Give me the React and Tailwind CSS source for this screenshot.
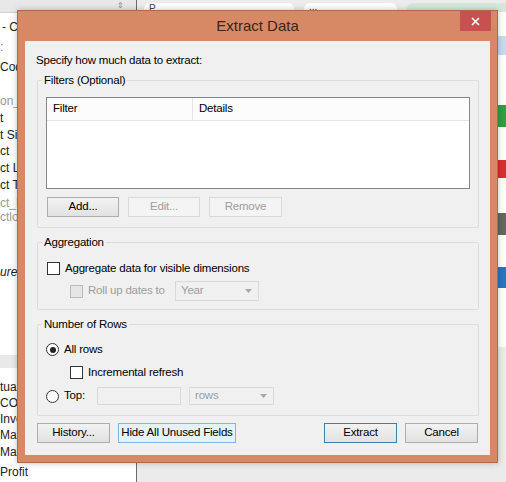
import React from 'react';

const font = { fontFamily: '"Liberation Sans", Arial, sans-serif' };

// rows of the field list peeking out from behind the dialog
const fieldRows = [
  { text: '- Coffee', mt: 'mt-[7px]', cls: 'text-[#222] pl-[2px]' },
  { text: ':', mt: 'mt-[6px]', cls: 'text-[#4a7fc1]' },
  { text: 'Code', mt: 'mt-[6px]', cls: 'text-[#222]' },
  { text: 'on_ID', mt: 'mt-[20px]', cls: 'text-[#999]' },
  { text: 't', mt: 'mt-[3px]', cls: 'text-[#222]' },
  { text: 't Size', mt: 'mt-[3px]', cls: 'text-[#222]' },
  { text: 'ct', mt: 'mt-[2px]', cls: 'text-[#222]' },
  { text: 'ct Line', mt: 'mt-[3px]', cls: 'text-[#222]' },
  { text: 'ct Type', mt: 'mt-[3px]', cls: 'text-[#222]' },
  { text: 'ct_Field', mt: 'mt-[4px]', cls: 'text-[#999]' },
  { text: 'ctlon', mt: 'mt-0', cls: 'text-[#999]' },
  { text: 'ure Names', mt: 'mt-[41px]', cls: 'text-[#222] italic' },
];

const measureRows = ['tual', 'COGS', 'Inventory', 'Margin', 'Marketing', 'Profit'];
const measureGaps = ['mt-[12px]', 'mt-[2px]', 'mt-[2px]', 'mt-[2px]', 'mt-[3px]', 'mt-[6px]'];

const Checkbox = ({ disabled }) => (
  <span
    className={`inline-block w-[13px] h-[13px] border shrink-0 ${
      disabled ? 'border-[#bcbcbc] bg-[#e6e6e6]' : 'border-[#333] bg-white'
    }`}
  />
);

const Radio = ({ checked }) => (
  <span className="w-[13px] h-[13px] rounded-full border border-[#333] bg-white flex items-center justify-center shrink-0">
    {checked && <span className="w-[6px] h-[6px] rounded-full bg-[#222]" />}
  </span>
);

const Button = ({ children, w, disabled, focus, hot }) => {
  let cls = 'border-[#adadad] bg-linear-to-b from-[#f2f2f2] to-[#e2e2e2] text-black';
  if (disabled) cls = 'border-[#d9d9d9] bg-[#f4f4f4] text-[#9d9d9d]';
  if (focus) cls = 'border-[#3c7fb1] bg-linear-to-b from-[#f2f2f2] to-[#e2e2e2] text-black';
  if (hot) cls = 'border-[#7eb4ea] bg-[#e5f1fb] text-black';
  return (
    <div className={`${w} h-[20px] border flex items-center justify-center whitespace-nowrap leading-none ${cls}`}>
      {children}
    </div>
  );
};

const Arrow = () => (
  <svg width="7" height="4" viewBox="0 0 7 4" className="shrink-0">
    <path d="M0 0 L7 0 L3.5 4 Z" fill="#a8a8a8" />
  </svg>
);

const Combo = ({ text, w, h }) => (
  <div className={`${w} ${h} border border-[#d9d9d9] bg-[#f0f0f0] flex items-center justify-between pl-[5px] pr-[6px] text-[#9d9d9d]`}>
    <span>{text}</span>
    <Arrow />
  </div>
);

const Group = ({ label, className, children }) => (
  <div className={`relative mr-[11px] ml-[12px] border border-[#dcdcdc] rounded-[2px] ${className}`}>
    <span className="absolute -top-[8px] left-[4px] px-[2px] bg-[#f0f0f0] leading-[15px] text-black">
      {label}
    </span>
    {children}
  </div>
);

export default function App() {
  return (
    <div className="relative w-[506px] h-[482px] overflow-hidden bg-white flex text-[12px]" style={font}>
      {/* left field list */}
      <div className="w-[137px] h-full bg-white flex flex-col border-r border-[#6b6b6b]">
        <div className="h-[13px] bg-[#e8e8e8] border-b border-[#d0d0d0] flex items-center justify-end pr-[12px]">
          <span className="text-[8px] text-[#888] leading-none">⇕</span>
        </div>
        {fieldRows.map((r, i) => (
          <div key={i} className={`${r.mt} leading-[14px] whitespace-nowrap ${r.cls}`}>{r.text}</div>
        ))}
        <div className="mt-[76px] h-[13px] bg-[#e9e9e9]" />
        {measureRows.map((t, i) => (
          <div key={t} className={`${measureGaps[i]} leading-[14px] whitespace-nowrap text-[#222]`}>{t}</div>
        ))}
      </div>

      {/* right view area */}
      <div className="flex-1 h-full flex flex-col bg-[#ebebeb]">
        <div className="h-[12px] bg-[#ececec] flex items-end gap-[10px] pl-[7px]">
          <div className="w-[150px] h-[9px] bg-white rounded-t-[6px] pl-[5px] text-[10px] leading-[12px] text-[#444]">P</div>
          <div className="w-[93px] h-[9px] bg-white rounded-t-[6px] pl-[5px] text-[10px] leading-[8px] text-[#444]">...</div>
          <div className="flex-1 h-[9px] bg-[#d3e8db] rounded-tl-[6px]" />
        </div>
        <div className="h-[335px] bg-white flex flex-col items-end">
          <div className="mt-[24px] w-[60px] h-[19px] bg-[#c8d9f0]" />
          <div className="mt-[50px] w-[60px] h-[22px] bg-[#2ea043]" />
          <div className="mt-[33px] w-[60px] h-[18px] bg-[#d62f2f]" />
          <div className="mt-[35px] w-[60px] h-[22px] bg-[#666666]" />
          <div className="mt-[32px] w-[60px] h-[21px] bg-[#2477c2]" />
        </div>
        <div className="flex-1 relative">
          <div className="absolute left-[5px] top-[100px] w-[154px] h-[16px] bg-white border border-[#cfcfcf]">
            <div className="mt-[7px] ml-[5px] w-[14px] h-[2px] bg-[#555]" />
          </div>
        </div>
      </div>

      {/* Extract Data dialog */}
      <div className="absolute left-[17px] top-[10px] w-[481px] h-[453px] bg-[#d78966] border border-[#b06a4b] shadow-[0_0_6px_rgba(0,0,0,0.25)] flex flex-col">
        <div className="relative h-[30px] flex items-center justify-center">
          <span className="text-[15px] text-[#3c2418] leading-none -mt-[1px]">Extract Data</span>
          <div className="absolute right-[6px] top-0 w-[31px] h-[20px] bg-[#c75050] flex items-center justify-center">
            <svg width="9" height="9" viewBox="0 0 9 9">
              <path d="M1 1 L8 8 M8 1 L1 8" stroke="#fff" strokeWidth="1.6" />
            </svg>
          </div>
        </div>

        <div className="mx-[7px] h-[414px] bg-[#f0f0f0] flex flex-col text-[11.5px] tracking-[-0.2px]">
          <div className="pt-[12px] pl-[11px] leading-[15px] text-black">Specify how much data to extract:</div>

          <Group label="Filters (Optional)" className="mt-[12px] h-[148px] pt-[16px] px-[8px]">
            <div className="h-[92px] border border-[#828790] bg-white flex flex-col">
              <div className="h-[23px] flex border-b border-[#e5e5e5] bg-[#fcfcfc]">
                <div className="w-[146px] border-r border-[#e5e5e5] pl-[6px] flex items-center">Filter</div>
                <div className="pl-[6px] flex items-center">Details</div>
              </div>
            </div>
            <div className="mt-[8px] ml-[1px] flex gap-[9px]">
              <Button w="w-[72px]">Add...</Button>
              <Button w="w-[72px]" disabled>Edit...</Button>
              <Button w="w-[73px]" disabled>Remove</Button>
            </div>
          </Group>

          <Group label="Aggregation" className="mt-[14px] h-[68px] pt-[19px] pl-[9px]">
            <div className="flex items-center gap-[5px] h-[13px]">
              <Checkbox />
              <span className="leading-none">Aggregate data for visible dimensions</span>
            </div>
            <div className="mt-[6px] h-[20px] flex items-center pl-[23px]">
              <Checkbox disabled />
              <span className="ml-[5px] w-[87px] text-[#9d9d9d]">Roll up dates to</span>
              <Combo text="Year" w="w-[84px]" h="h-[20px]" />
            </div>
          </Group>

          <Group label="Number of Rows" className="mt-[14px] h-[92px] pt-[18px] pl-[8px]">
            <div className="flex items-center gap-[5px] h-[13px]">
              <Radio checked />
              <span className="leading-none">All rows</span>
            </div>
            <div className="mt-[10px] flex items-center gap-[5px] h-[13px] pl-[24px]">
              <Checkbox />
              <span className="leading-none">Incremental refresh</span>
            </div>
            <div className="mt-[8px] h-[18px] flex items-center">
              <Radio />
              <span className="ml-[5px] w-[33px]">Top:</span>
              <div className="w-[84px] h-[18px] border border-[#d9d9d9] bg-[#f0f0f0]" />
              <div className="ml-[8px]">
                <Combo text="rows" w="w-[85px]" h="h-[18px]" />
              </div>
            </div>
          </Group>

          <div className="mt-[7px] px-[12px] flex items-center">
            <Button w="w-[73px]">History...</Button>
            <div className="ml-[8px]">
              <Button w="w-[118px]" hot>Hide All Unused Fields</Button>
            </div>
            <div className="ml-auto flex gap-[8px]">
              <Button w="w-[73px]" focus>Extract</Button>
              <Button w="w-[73px]">Cancel</Button>
            </div>
          </div>
        </div>
      </div>
    </div>
  );
}
